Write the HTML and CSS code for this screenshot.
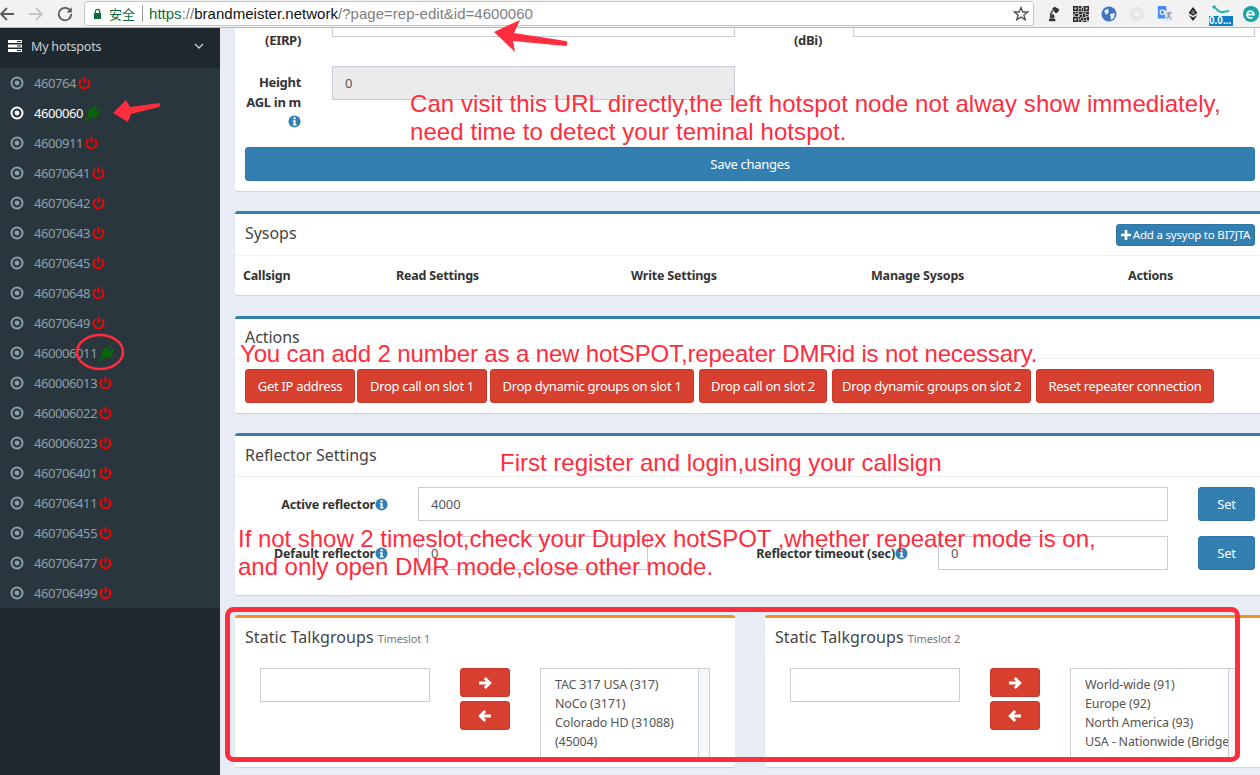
FILE: index.html
```html
<!DOCTYPE html>
<html lang="en">
<head>
<meta charset="utf-8">
<title>BrandMeister</title>
<link rel="stylesheet" href="styles.css">
</head>
<body>
<svg class="defs" width="0" height="0">
  <symbol id="dot" viewBox="0 0 14 14"><circle cx="7" cy="7" r="5.500" fill="none" stroke="currentColor" stroke-width="2"/><circle cx="7" cy="7" r="2.400" fill="currentColor"/></symbol>
  <symbol id="power" viewBox="0 0 14 14"><path d="M3.900 2.900A5.400 5.400 0 1 0 10.100 2.900" fill="none" stroke="currentColor" stroke-width="2"/><path d="M7 .3V6.800" stroke="currentColor" stroke-width="2.100" fill="none"/></symbol>
  <symbol id="plug" viewBox="0 0 24 24"><g transform="rotate(45 12 12)" fill="currentColor"><rect x="7" y="0" width="3.200" height="8"/><rect x="13.800" y="0" width="3.200" height="8"/><path d="M4.500 6.500h15v4.500a7.500 7.500 0 0 1-15 0z"/><rect x="10.600" y="17" width="2.800" height="10"/></g></symbol>
  <symbol id="info" viewBox="0 0 14 14"><circle cx="7" cy="7" r="6.500" fill="currentColor"/><rect x="6" y="2.400" width="2.200" height="2.200" fill="#fff"/><path d="M5.200 5.700H8.200V10H9.200V11.300H5.200V10H6.100V7H5.200z" fill="#fff"/></symbol>
  <symbol id="right" viewBox="0 0 14 14"><path d="M1 7H11M6.800 2 11.800 7 6.800 12" fill="none" stroke="currentColor" stroke-width="2.800"/></symbol>
  <symbol id="left" viewBox="0 0 14 14"><path d="M13 7H3M7.200 2 2.200 7 7.200 12" fill="none" stroke="currentColor" stroke-width="2.800"/></symbol>
</svg>

<header class="toolbar">
  <svg class="nav" viewBox="0 0 16 16"><path d="M15 8H2.500M8 2 2 8l6 6" fill="none" stroke="#5c5c5c" stroke-width="1.800"/></svg>
  <svg class="nav" viewBox="0 0 16 16"><path d="M1 8H13.500M8 2l6 6-6 6" fill="none" stroke="#c6c6c6" stroke-width="1.800"/></svg>
  <svg class="nav" viewBox="0 0 16 16"><path d="M13.500 5.200A6.200 6.200 0 1 0 14.200 8" fill="none" stroke="#5c5c5c" stroke-width="1.800"/><path d="M14.800 1.200V6.400H9.600z" fill="#5c5c5c"/></svg>
  <div class="omnibox">
    <svg class="lock" viewBox="0 0 10 12"><path d="M2.500 5V3.400a2.500 2.500 0 0 1 5 0V5" fill="none" stroke="#0b6b3a" stroke-width="1.300"/><rect x="1" y="5" width="8" height="6.500" rx=".6" fill="#0b6b3a"/></svg>
    <span class="secure">安全</span>
    <span class="sep"></span>
    <span class="url"><span class="scheme">https</span><span class="dim">://</span><span class="host">brandmeister.network</span><span class="dim">/?page=rep-edit&amp;id=4600060</span></span>
    <svg class="star" viewBox="0 0 16 16"><path d="M8 1.600 9.900 6h4.700l-3.700 3 1.300 4.700L8 11.100l-4.200 2.600L5.100 9 1.400 6h4.700z" fill="none" stroke="#555" stroke-width="1.400"/></svg>
  </div>
  <div class="exts">
    <svg class="ext" viewBox="0 0 20 20"><path d="M5 16h8v3H5z" fill="#333"/><path d="M8 16 7 10 10 5" fill="none" stroke="#555" stroke-width="2"/><path d="M9 3l3-2 6 3-2 4-3 1z" fill="#333"/><circle cx="9" cy="13" r="3" fill="#444"/></svg>
    <svg class="ext" viewBox="0 0 16 16"><rect width="16" height="16" fill="#a8a8a8"/><path d="M0 0h5v5H0zM11 0h5v5h-5zM0 11h5v5H0zM6 0h2v2H6zM9 2h1v3H9zM6 3h2v2H6zM0 6h2v2H0zM3 6h2v1H3zM6 6h3v2H6zM10 6h2v1h-2zM13 6h3v2h-3zM2 8h3v2H2zM7 9h2v2H7zM10 8h2v3h-2zM13 9h2v1h-2zM6 11h1v2H6zM8 12h2v2H8zM11 12h2v2h-2zM14 11h2v3h-2zM6 14h2v2H6zM10 15h3v1h-3z" fill="#2b2b2b"/><path d="M1.500 1.500h2v2h-2zM12.500 1.500h2v2h-2zM1.500 12.500h2v2h-2z" fill="#ddd"/></svg>
    <svg class="ext" viewBox="0 0 16 16"><circle cx="8" cy="8" r="7.500" fill="#3f73c4"/><path d="M3 5 7 2.500 8 6 5 9zM9 8l5-1-1 5-3 2z" fill="#e4ecf8"/></svg>
    <svg class="ext" viewBox="0 0 16 16"><circle cx="8" cy="8" r="7.500" fill="#e6e6e6"/><path d="M9 2A6 6 0 0 0 7 14 5 5 0 0 1 9 2z" fill="#bdbdbd"/><path d="M10 3a5 5 0 0 1-1 10 4 4 0 0 0 1-10z" fill="#cacaca"/><circle cx="8" cy="8" r="2.500" fill="#f4f4f4"/></svg>
    <svg class="ext" viewBox="0 0 16 18"><path d="M0 0h9l3 14H0z" fill="#4c8bf5"/><path d="M7 5h9v12H9z" fill="#dfe4ec"/><circle cx="5" cy="7" r="2.500" fill="none" stroke="#fff" stroke-width="1.200"/><path d="M10 8h5M12.500 8c0 3-1 5-3 6M11 10c1 2 2 3 4 4" fill="none" stroke="#5a6b85"/></svg>
    <svg class="ext" viewBox="0 0 16 18"><path d="M8 1 13 8 8 11 3 8z" fill="#222"/><path d="M3 10 8 13 13 10 8 17z" fill="#222"/><path d="M8 4 10.500 8 8 9.500 5.500 8z" fill="#777"/></svg>
    <div class="ext badge-ext">
      <svg class="wave" viewBox="0 0 24 12"><circle cx="5" cy="3" r="1.800" fill="#23b5a6"/><path d="M5 3c2 0 3 5 7 5 3 0 6-1 8-1" fill="none" stroke="#23b5a6" stroke-width="2"/></svg>
      <span class="badge">0.0...</span>
    </div>
    <svg class="ext" viewBox="0 0 16 16"><circle cx="8" cy="8" r="8" fill="#17a2a6"/><path d="M4 8.500h7a3.500 3.500 0 1 0-1.500 3" fill="none" stroke="#fff" stroke-width="1.800"/></svg>
  </div>
</header>

<div class="layout">
  <aside class="sidebar">
    <div class="side-head">
      <svg class="server" viewBox="0 0 14 12"><path d="M0 0h14v3H0zM0 4.500h14v3H0zM0 9h14v3H0z" fill="#fff"/><path d="M9 1h4v1H9zM9 5.500h4v1H9zM9 10h4v1H9z" fill="#222"/></svg>
      <span class="side-title">My hotspots</span>
      <svg class="chev" viewBox="0 0 10 6"><path d="M1 1l4 4 4-4" fill="none" stroke="#c8d0d4" stroke-width="1.300"/></svg>
    </div>
    <ul class="nodes">
      <li class="node"><svg class="i-dot"><use href="#dot"/></svg><span>460764</span><svg class="i-pow"><use href="#power"/></svg></li>
      <li class="node active"><svg class="i-dot"><use href="#dot"/></svg><span>4600060</span><svg class="i-plug"><use href="#plug"/></svg></li>
      <li class="node"><svg class="i-dot"><use href="#dot"/></svg><span>4600911</span><svg class="i-pow"><use href="#power"/></svg></li>
      <li class="node"><svg class="i-dot"><use href="#dot"/></svg><span>46070641</span><svg class="i-pow"><use href="#power"/></svg></li>
      <li class="node"><svg class="i-dot"><use href="#dot"/></svg><span>46070642</span><svg class="i-pow"><use href="#power"/></svg></li>
      <li class="node"><svg class="i-dot"><use href="#dot"/></svg><span>46070643</span><svg class="i-pow"><use href="#power"/></svg></li>
      <li class="node"><svg class="i-dot"><use href="#dot"/></svg><span>46070645</span><svg class="i-pow"><use href="#power"/></svg></li>
      <li class="node"><svg class="i-dot"><use href="#dot"/></svg><span>46070648</span><svg class="i-pow"><use href="#power"/></svg></li>
      <li class="node"><svg class="i-dot"><use href="#dot"/></svg><span>46070649</span><svg class="i-pow"><use href="#power"/></svg></li>
      <li class="node"><svg class="i-dot"><use href="#dot"/></svg><span>460006011</span><svg class="i-plug"><use href="#plug"/></svg></li>
      <li class="node"><svg class="i-dot"><use href="#dot"/></svg><span>460006013</span><svg class="i-pow"><use href="#power"/></svg></li>
      <li class="node"><svg class="i-dot"><use href="#dot"/></svg><span>460006022</span><svg class="i-pow"><use href="#power"/></svg></li>
      <li class="node"><svg class="i-dot"><use href="#dot"/></svg><span>460006023</span><svg class="i-pow"><use href="#power"/></svg></li>
      <li class="node"><svg class="i-dot"><use href="#dot"/></svg><span>460706401</span><svg class="i-pow"><use href="#power"/></svg></li>
      <li class="node"><svg class="i-dot"><use href="#dot"/></svg><span>460706411</span><svg class="i-pow"><use href="#power"/></svg></li>
      <li class="node"><svg class="i-dot"><use href="#dot"/></svg><span>460706455</span><svg class="i-pow"><use href="#power"/></svg></li>
      <li class="node"><svg class="i-dot"><use href="#dot"/></svg><span>460706477</span><svg class="i-pow"><use href="#power"/></svg></li>
      <li class="node"><svg class="i-dot"><use href="#dot"/></svg><span>460706499</span><svg class="i-pow"><use href="#power"/></svg></li>
    </ul>
  </aside>

  <main class="main">
    <section class="box box-settings">
      <div class="form-row first">
        <label class="lbl">(EIRP)</label>
        <div class="field f-left"></div>
        <label class="lbl lbl-right">(dBi)</label>
        <div class="field f-right"></div>
      </div>
      <div class="form-row">
        <label class="lbl">Height<br>AGL in m<br><svg class="i-info"><use href="#info"/></svg></label>
        <div class="field f-left disabled">0</div>
      </div>
      <button class="btn btn-blue btn-wide">Save changes</button>
    </section>

    <section class="box box-blue">
      <div class="box-head">
        <h3 class="title">Sysops</h3>
        <button class="btn btn-blue btn-xs"><svg class="i-plus" viewBox="0 0 10 10"><path d="M5 0v10M0 5h10" stroke="#fff" stroke-width="2.600"/></svg>Add a sysyop to BI7JTA</button>
      </div>
      <div class="thead">
        <span>Callsign</span><span>Read Settings</span><span>Write Settings</span><span>Manage Sysops</span><span>Actions</span>
      </div>
    </section>

    <section class="box box-blue box-actions">
      <div class="box-head head-actions"><h3 class="title">Actions</h3></div>
      <div class="actions">
        <button class="btn btn-red">Get IP address</button>
        <button class="btn btn-red">Drop call on slot 1</button>
        <button class="btn btn-red">Drop dynamic groups on slot 1</button>
        <button class="btn btn-red">Drop call on slot 2</button>
        <button class="btn btn-red">Drop dynamic groups on slot 2</button>
        <button class="btn btn-red">Reset repeater connection</button>
      </div>
    </section>

    <section class="box box-blue box-reflector">
      <div class="box-head head-reflector"><h3 class="title">Reflector Settings</h3></div>
      <div class="ref-row">
        <label class="ref-lbl">Active reflector<svg class="i-info"><use href="#info"/></svg></label>
        <div class="field f-full">4000</div>
        <button class="btn btn-blue btn-set">Set</button>
      </div>
      <div class="ref-row">
        <label class="ref-lbl">Default reflector<svg class="i-info"><use href="#info"/></svg></label>
        <div class="field f-half">0</div>
        <label class="ref-lbl ref-lbl-wide">Reflector timeout (sec)<svg class="i-info"><use href="#info"/></svg></label>
        <div class="field f-half">0</div>
        <button class="btn btn-blue btn-set">Set</button>
      </div>
    </section>

    <div class="tg-row">
      <section class="box box-orange tg">
        <h3 class="tg-title">Static Talkgroups <small>Timeslot 1</small></h3>
        <div class="tg-body">
          <div class="tg-input"></div>
          <div class="tg-btns">
            <button class="btn btn-red btn-arrow"><svg class="i-arrow"><use href="#right"/></svg></button>
            <button class="btn btn-red btn-arrow"><svg class="i-arrow"><use href="#left"/></svg></button>
          </div>
          <div class="tg-list">
            <div class="tg-items"><div>TAC 317 USA (317)</div><div>NoCo (3171)</div><div>Colorado HD (31088)</div><div>(45004)</div></div>
            <div class="tg-scroll"></div>
          </div>
        </div>
      </section>
      <section class="box box-orange tg">
        <h3 class="tg-title">Static Talkgroups <small>Timeslot 2</small></h3>
        <div class="tg-body">
          <div class="tg-input"></div>
          <div class="tg-btns">
            <button class="btn btn-red btn-arrow"><svg class="i-arrow"><use href="#right"/></svg></button>
            <button class="btn btn-red btn-arrow"><svg class="i-arrow"><use href="#left"/></svg></button>
          </div>
          <div class="tg-list">
            <div class="tg-items"><div>World-wide (91)</div><div>Europe (92)</div><div>North America (93)</div><div>USA - Nationwide (Bridge)</div></div>
            <div class="tg-scroll"></div>
          </div>
        </div>
      </section>
    </div>
  </main>
</div>

<svg class="marks" viewBox="0 0 1260 775" width="1260" height="775">
  <g fill="#ff2d3d">
    <path d="M494 32 520 20 514 33 566 41Q569 43 566 46L513 41 515 52z"/>
    <path d="M113 113 126 100 130 107 159 103Q161 105 159 107L131 114 128 122z"/>
  </g>
  <ellipse cx="100" cy="352" rx="23" ry="17" fill="none" stroke="#ff2d3d" stroke-width="2.500"/>
  <rect x="227.500" y="609.500" width="1010" height="150" rx="6" fill="none" stroke="#ff2d3d" stroke-width="5"/>
</svg>
<p class="note note-url">Can visit this URL directly,the left hotspot node not alway show immediately,<br>need time to detect your teminal hotspot.</p>
<p class="note note-add">You can add 2 number as a new hotSPOT,repeater DMRid is not necessary.</p>
<p class="note note-reg">First register and login,using your callsign</p>
<p class="note note-slot">If not show 2 timeslot,check your Duplex hotSPOT ,whether repeater mode is on,<br>and only open DMR mode,close other mode.</p>
</body>
</html>
```

FILE: styles.css
```css
* { box-sizing: border-box; }
html, body { margin: 0; padding: 0; }
body {
  width: 1260px;
  height: 775px;
  overflow: hidden;
  position: relative;
  font-family: "Noto Sans", sans-serif;
  font-size: 13px;
  color: #333;
  background: #e8edf5;
}
.defs { position: absolute; }

/* browser chrome */
.toolbar {
  height: 28px;
  background: #f2f2f2;
  border-bottom: 1px solid #b9b9b9;
  display: flex;
  align-items: center;
  position: relative;
}
.nav { width: 16px; height: 16px; margin-right: 13px; flex: none; }
.nav:first-child { margin-left: -1px; }
.omnibox {
  width: 950px;
  height: 25px;
  margin-left: -2px;
  flex: none;
  background: #fff;
  border: 1px solid #c6c6c6;
  border-radius: 3px;
  display: flex;
  align-items: center;
  padding: 0 4px 0 8px;
  font-family: "Liberation Sans", Arial, sans-serif;
  font-size: 15px;
}
.lock { width: 9px; height: 12px; flex: none; }
.secure { color: #0b6b3a; margin-left: 7px; font-family: "Noto Sans CJK SC", sans-serif; font-size: 13px; }
.sep { width: 1px; height: 17px; background: #9a9a9a; margin: 0 6px 0 7px; }
.url { white-space: nowrap; letter-spacing: .02px; }
.scheme { color: #0b6b3a; }
.dim { color: #808080; }
.host { color: #111; }
.star { width: 16px; height: 16px; margin-left: auto; }
.exts { display: flex; align-items: center; gap: 12px; margin-left: 11px; flex: none; }
.ext { width: 16px; height: 16px; flex: none; }
.badge-ext { position: relative; width: 24px; height: 24px; margin: 0 -2px 0 -4px; }
.wave { position: absolute; left: 0; top: 2px; width: 24px; height: 12px; }
.badge {
  position: absolute; left: 0; bottom: 0; width: 24px; height: 10px;
  background: #0c7fc6; color: #fff; font: bold 10px/10px "Liberation Sans", sans-serif; overflow: hidden; white-space: nowrap;
}

/* layout */
.layout { display: flex; height: 747px; }
.sidebar { width: 220px; flex: none; background: #1f282e; }
.side-head {
  height: 40px;
  display: flex;
  align-items: center;
  padding: 0 16px 4px 8px;
  color: #c8d0d4;
}
.server { width: 14px; height: 12px; flex: none; }
.side-title { margin-left: 9px; flex: 1; font-size: 12.500px; letter-spacing: -.2px; }
.chev { width: 10px; height: 6px; }
.nodes { list-style: none; margin: 0; padding: 0; background: #2a363d; }
.node {
  height: 30px;
  display: flex;
  align-items: center;
  padding-left: 10px;
  color: #8aa0ab;
  font-size: 13px;
  letter-spacing: -.42px;
}
.node.active { color: #fff; }
.node span { margin-left: 10px; }
.i-dot { width: 14px; height: 14px; flex: none; }
.i-pow { width: 13px; height: 14px; margin-left: 2px; color: #f00; flex: none; }
.i-plug { width: 17px; height: 17px; margin-left: 1px; color: #0a640a; flex: none; }

.main { width: 1040px; height: 747px; padding-left: 15px; overflow: hidden; flex: none; display: flex; flex-direction: column; gap: 20px; }
.box {
  width: 1030px;
  flex: none;
  background: #fff;
  border-radius: 3px;
  box-shadow: 0 1px 1px rgba(0, 0, 0, .12);
}
.box-blue { border-top: 3px solid #337fb2; }
.box-orange { border-top: 3px solid #f0931e; }
.box-settings { margin-top: -25px; padding: 0 10px 10px; }
.box-actions { margin-top: 1px; }

.form-row { display: flex; }
.form-row.first { height: 63px; }
.form-row + .form-row { height: 81px; }
.lbl { width: 56px; margin-right: 31px; padding-top: 7px; text-align: right; font-weight: bold; font-size: 13px; line-height: 19.500px; color: #333; letter-spacing: -.3px; flex: none; }
.first .lbl { padding-top: 28px; }
.lbl-right { margin-left: 56px; width: 31px; white-space: nowrap; }
.lbl .i-info { margin-top: 3px; }
.field {
  height: 34px;
  border: 1px solid #c9cdd8;
  padding: 0 12px;
  line-height: 32px;
  color: #555;
  flex: none;
  background: #fff;
  font-size: 13px;
}
.f-left { width: 403px; }
.f-right { width: 402px; }
.disabled { background: #ebebeb; }
.i-info { width: 13px; height: 13px; color: #337fb2; vertical-align: -2px; }

.btn {
  border: 1px solid transparent;
  border-radius: 3px;
  color: #fff;
  font-family: "Noto Sans", sans-serif;
  font-size: 13px;
  letter-spacing: -.3px;
  height: 34px;
  padding: 0;
  display: block;
}
.btn-blue { background: #337fb2; border-color: #2e76a6; }
.btn-red { background: #d73f2f; border-color: #c9382a; }
.btn-wide { width: 1010px; }
.btn-xs { height: 22px; width: 139px; font-size: 11.500px; letter-spacing: -.2px; display: flex; align-items: center; justify-content: center; gap: 2px; }
.i-plus { width: 10px; height: 10px; }

.box-head { height: 42px; padding: 0 10px; display: flex; align-items: center; justify-content: space-between; border-bottom: 1px solid #f1f1f1; }
.head-actions { height: 40px; }
.head-reflector { height: 41px; }
.head-reflector .title { margin-bottom: 2px; }
.title { margin: 0 0 4px; font-size: 16px; font-weight: normal; color: #444; letter-spacing: -.05px; }
.thead { height: 39px; display: grid; grid-template-columns: 153px 235px 240px 257px 1fr; align-items: center; padding-left: 8px; font-weight: bold; font-size: 12.500px; letter-spacing: -.2px; color: #333; }

.actions { display: flex; padding: 10px; height: 54px; }
.actions .btn { flex: none; }
.actions .btn:nth-child(1) { width: 110px; margin-right: 2px; }
.actions .btn:nth-child(2) { width: 130px; margin-right: 3px; }
.actions .btn:nth-child(3) { width: 204px; margin-right: 5px; }
.actions .btn:nth-child(4) { width: 128px; margin-right: 5px; }
.actions .btn:nth-child(5) { width: 199px; margin-right: 5px; }
.actions .btn:nth-child(6) { width: 178px; }

.box-reflector { padding-bottom: 25px; }
.ref-row { display: flex; align-items: center; margin: 10px 10px 15px; }
.ref-row:last-child { margin-bottom: 0; }
.ref-lbl { width: 143px; margin-right: 30px; text-align: right; font-weight: bold; font-size: 12.500px; letter-spacing: -.15px; color: #333; white-space: nowrap; flex: none; }
.ref-lbl-wide { width: 260px; }
.f-full { width: 750px; }
.f-half { width: 230px; }
.btn-set { width: 57px; margin-left: 30px; flex: none; }

.tg-row { display: flex; gap: 30px; width: 1030px; flex: none; }
.tg { width: 500px; height: 152px; padding-left: 10px; overflow: hidden; }
.tg-title { margin: 0; height: 50px; padding-top: 8px; font-size: 16px; font-weight: normal; color: #444; letter-spacing: .05px; }
.tg-title small { font-size: 11px; color: #777; letter-spacing: -.1px; }
.tg-body { display: flex; padding-left: 15px; }
.tg-input { width: 170px; height: 34px; border: 1px solid #c9cdd8; flex: none; }
.tg-btns { width: 50px; margin: 0 30px; display: flex; flex-direction: column; gap: 4px; flex: none; }
.btn-arrow { width: 50px; height: 29px; display: flex; align-items: center; justify-content: center; }
.i-arrow { width: 14px; height: 14px; color: #fff; }
.tg-list { width: 170px; height: 90px; border: 1px solid #c9cdd8; border-bottom: 0; display: flex; overflow: hidden; flex: none; color: #555; }
.tg-items { width: 157px; padding: 6px 0 0 14px; line-height: 19px; white-space: nowrap; overflow: hidden; font-size: 12.500px; letter-spacing: -.15px; flex: none; }
.tg-scroll { width: 12px; background: #f6f7f8; border-left: 1px solid #c9cdd8; flex: none; }

/* red annotations painted over the screenshot */
.marks { position: absolute; left: 0; top: 0; pointer-events: none; }
.note {
  position: absolute;
  margin: 0;
  color: #ff2d3d;
  font-family: "Liberation Sans", Arial, sans-serif;
  font-size: 24px;
  line-height: 28px;
  white-space: nowrap;
}
.note-url { left: 410px; top: 90px; letter-spacing: .07px; }
.note-add { left: 240px; top: 340px; letter-spacing: -.14px; }
.note-reg { left: 500px; top: 449px; }
.note-slot { left: 238px; top: 525px; letter-spacing: -.03px; }
```
